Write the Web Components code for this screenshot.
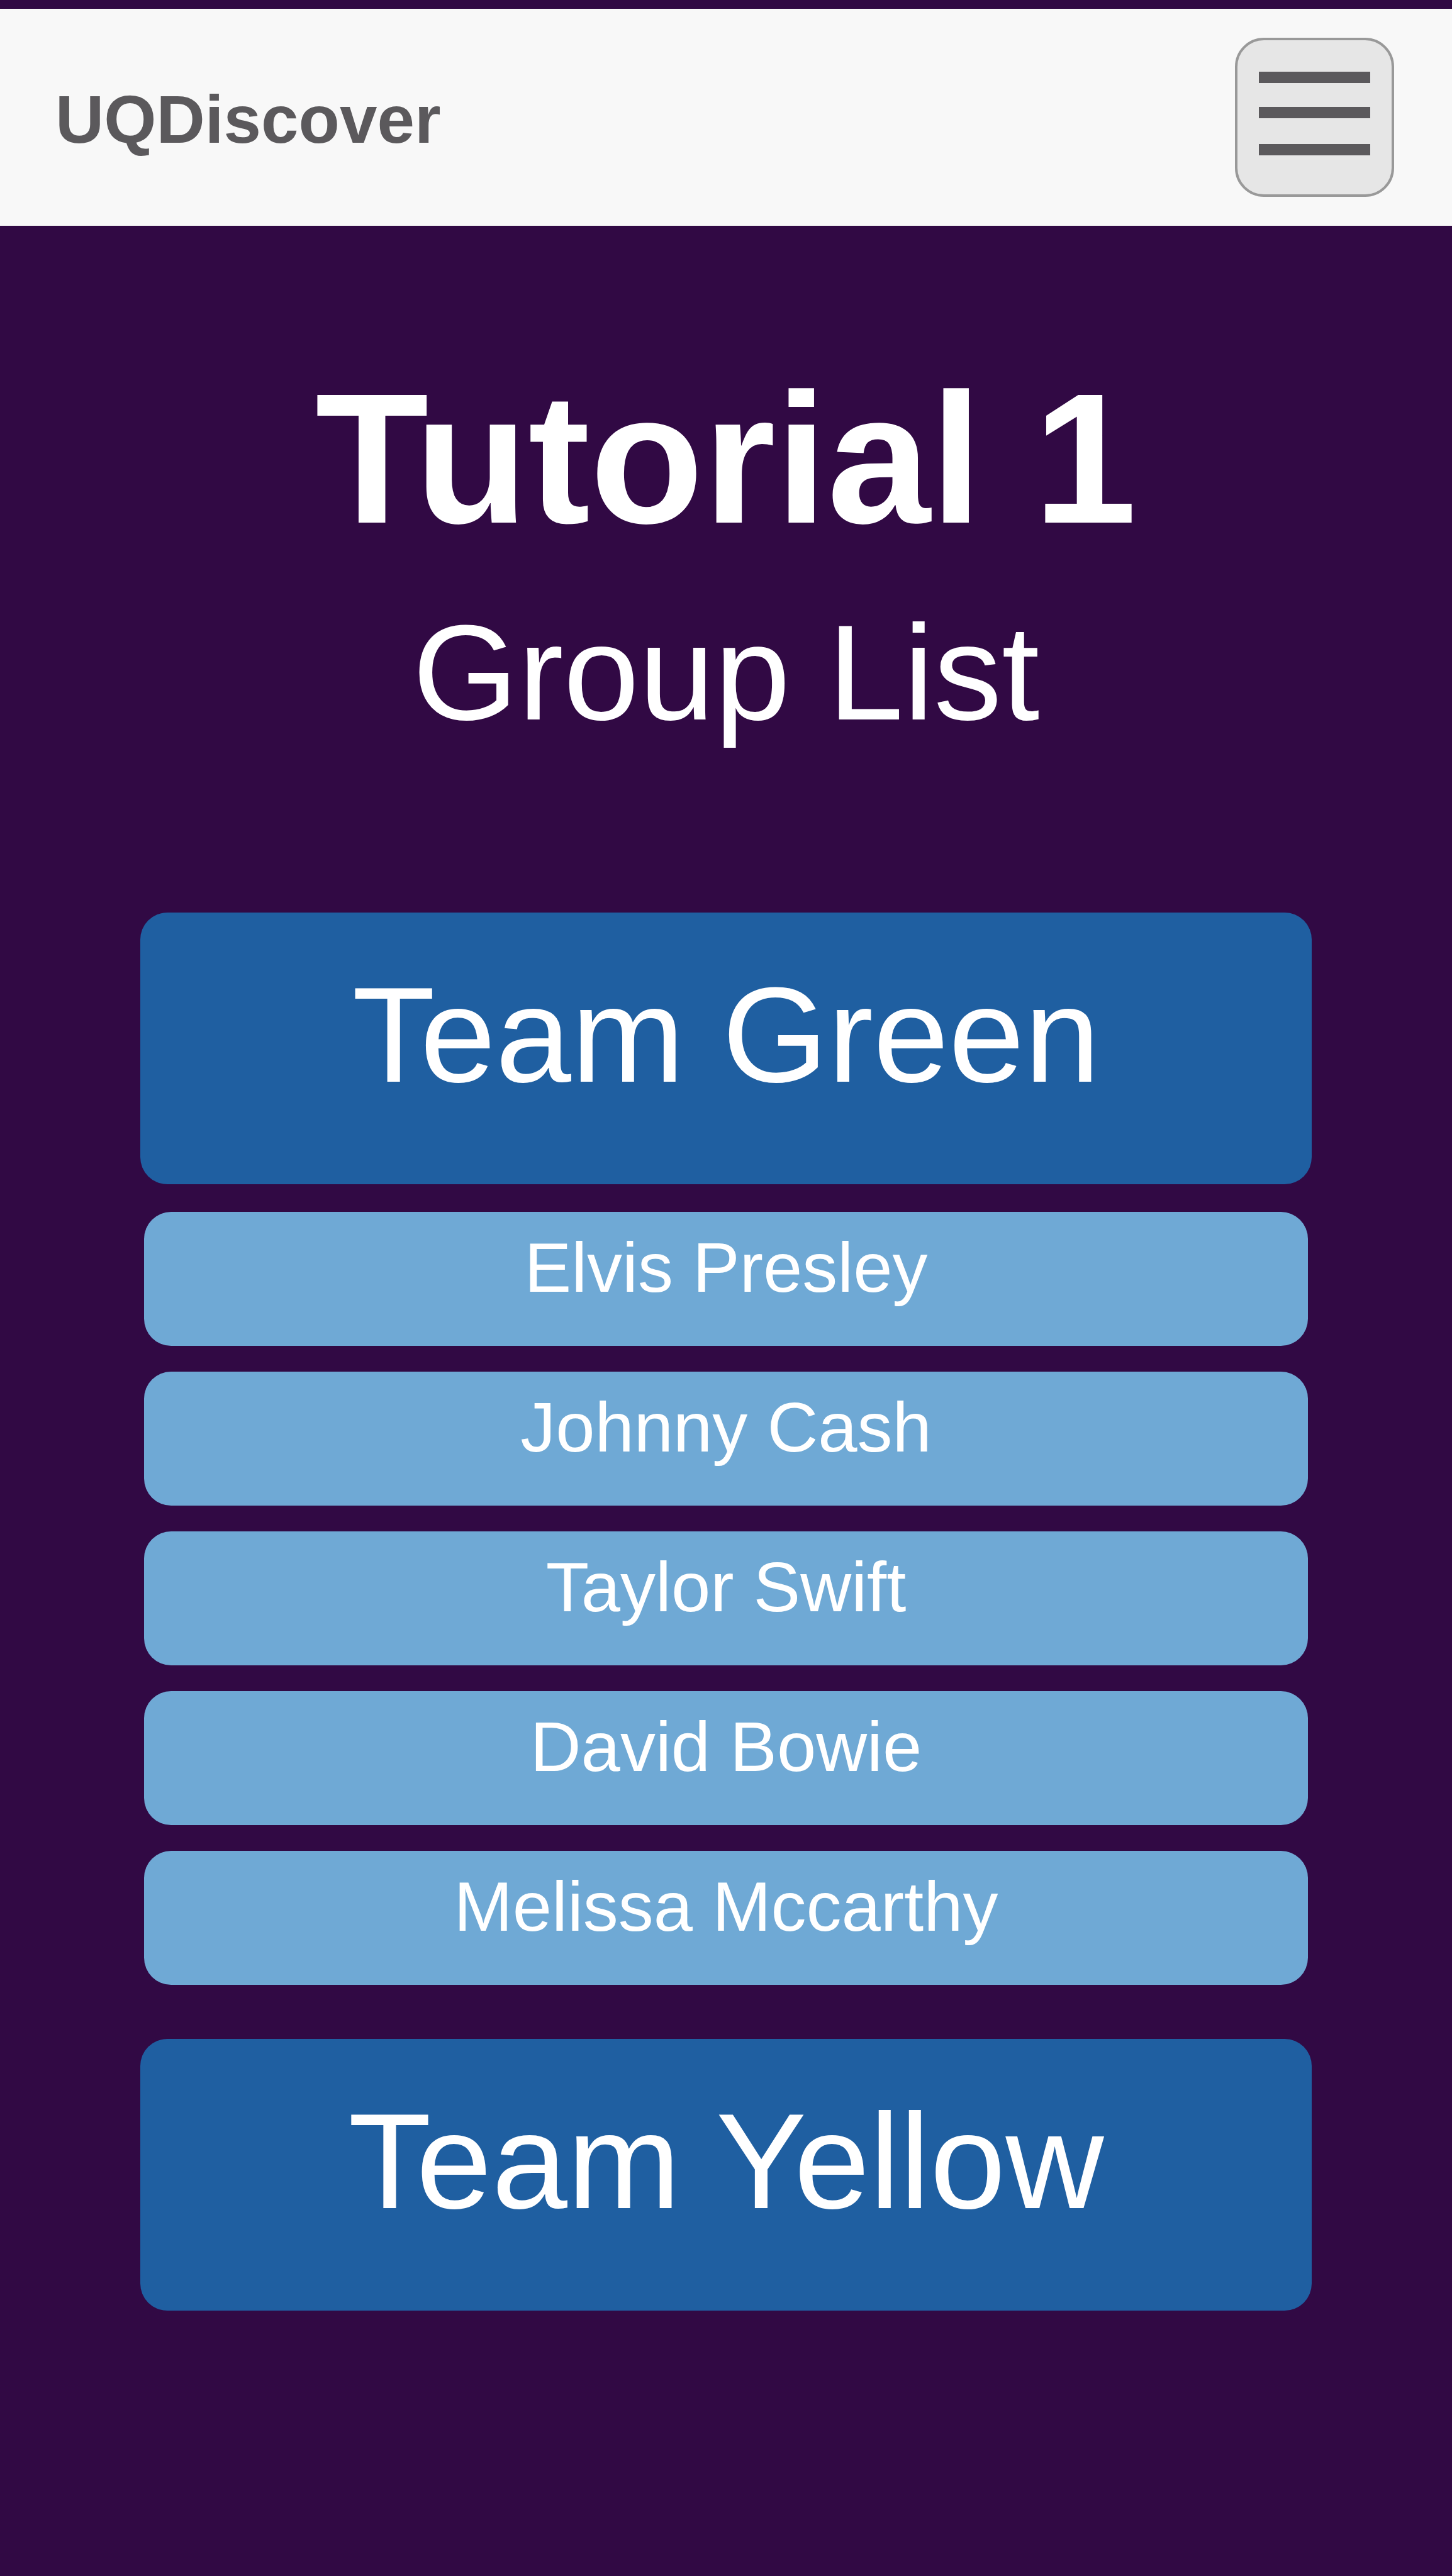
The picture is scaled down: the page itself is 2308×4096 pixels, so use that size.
<!DOCTYPE html>
<html lang="en">
<head>
<meta charset="utf-8">
<meta name="viewport" content="width=device-width, initial-scale=1">
<title>UQDiscover</title>
<style>
  html { background: #310944; }
  body {
    margin: 0;
    min-height: 100vh;
    background: #310944;
    font-family: "Liberation Sans", Arial, sans-serif;
    color: #fff;
    --bar: #f8f8f8;
    --ink: #5b595c;
    --team: #1f5fa1;
    --member: #6fa9d5;
    --radius: 43px;
  }
</style>
</head>
<body>
<group-page>
  <app-bar slot="bar">UQDiscover</app-bar>
  <page-title slot="title">Tutorial 1<span slot="subtitle">Group List</span></page-title>
  <team-group>
    <span slot="name">Team Green</span>
    <team-member>Elvis Presley</team-member>
    <team-member>Johnny Cash</team-member>
    <team-member>Taylor Swift</team-member>
    <team-member>David Bowie</team-member>
    <team-member>Melissa Mccarthy</team-member>
  </team-group>
  <team-group>
    <span slot="name">Team Yellow</span>
  </team-group>
</group-page>

<script>
  class BaseElement extends HTMLElement {
    constructor() {
      super();
      this.attachShadow({ mode: "open" }).innerHTML = this.constructor.markup;
    }
  }

  customElements.define("group-page", class extends BaseElement {
    static markup = `
      <style>
        :host { display: block; padding-top: 14px; }
        main { display: flex; flex-direction: column; padding: 202px 223px; }
        .teams { display: flex; flex-direction: column; gap: 86px; margin-top: 258px; }
      </style>
      <slot name="bar"></slot>
      <main>
        <slot name="title"></slot>
        <div class="teams"><slot></slot></div>
      </main>`;
  });

  customElements.define("app-bar", class extends BaseElement {
    static markup = `
      <style>
        :host { display: block; }
        header {
          display: flex; align-items: center; justify-content: space-between;
          padding: 46px 92px 46px 88px; background: var(--bar);
        }
        a {
          padding-top: 6px; color: var(--ink); text-decoration: none;
          font-size: 107px; line-height: 124px; font-weight: 700;
        }
        button {
          box-sizing: border-box; width: 253px; height: 253px; padding: 0;
          border: 4px solid #999; border-radius: 46px; background: #e6e6e6; color: var(--ink);
        }
        svg { display: block; width: 100%; height: 100%; }
      </style>
      <header>
        <a href="#"><slot></slot></a>
        <button type="button" aria-label="Menu">
          <svg viewBox="0 0 245 245" fill="currentColor" aria-hidden="true">
            <rect x="34" y="50" width="177" height="18"/>
            <rect x="34" y="106" width="177" height="18"/>
            <rect x="34" y="165" width="177" height="18"/>
          </svg>
        </button>
      </header>`;
  });

  customElements.define("page-title", class extends BaseElement {
    static markup = `
      <style>
        :host { display: flex; flex-direction: column; gap: 48px; text-align: center; }
        h1, p { margin: 0; }
        h1 { font-size: 295px; line-height: 336px; font-weight: 700; }
        p { font-size: 216px; line-height: 248px; }
      </style>
      <h1><slot></slot></h1>
      <p><slot name="subtitle"></slot></p>`;
  });

  customElements.define("team-group", class extends BaseElement {
    static markup = `
      <style>
        :host { display: flex; flex-direction: column; gap: 44px; }
        :host(:last-child) { gap: 0; }
        h2 { margin: 0; font: inherit; }
        button {
          display: block; width: 100%; padding: 70px 0 114px;
          border: 0; border-radius: var(--radius); background: var(--team);
          color: inherit; font-family: inherit; font-size: 216px; line-height: 248px; text-align: center;
        }
        .members { display: flex; flex-direction: column; gap: 41px; padding: 0 6px; }
      </style>
      <h2><button type="button"><slot name="name"></slot></button></h2>
      <div class="members" role="list"><slot></slot></div>`;
  });

  customElements.define("team-member", class extends BaseElement {
    static markup = `
      <style>
        :host {
          display: block; padding: 27px 0 62px; border-radius: var(--radius);
          background: var(--member); font-size: 112px; line-height: 124px; text-align: center;
        }
      </style>
      <div role="listitem"><slot></slot></div>`;
  });
</script>
</body>
</html>
